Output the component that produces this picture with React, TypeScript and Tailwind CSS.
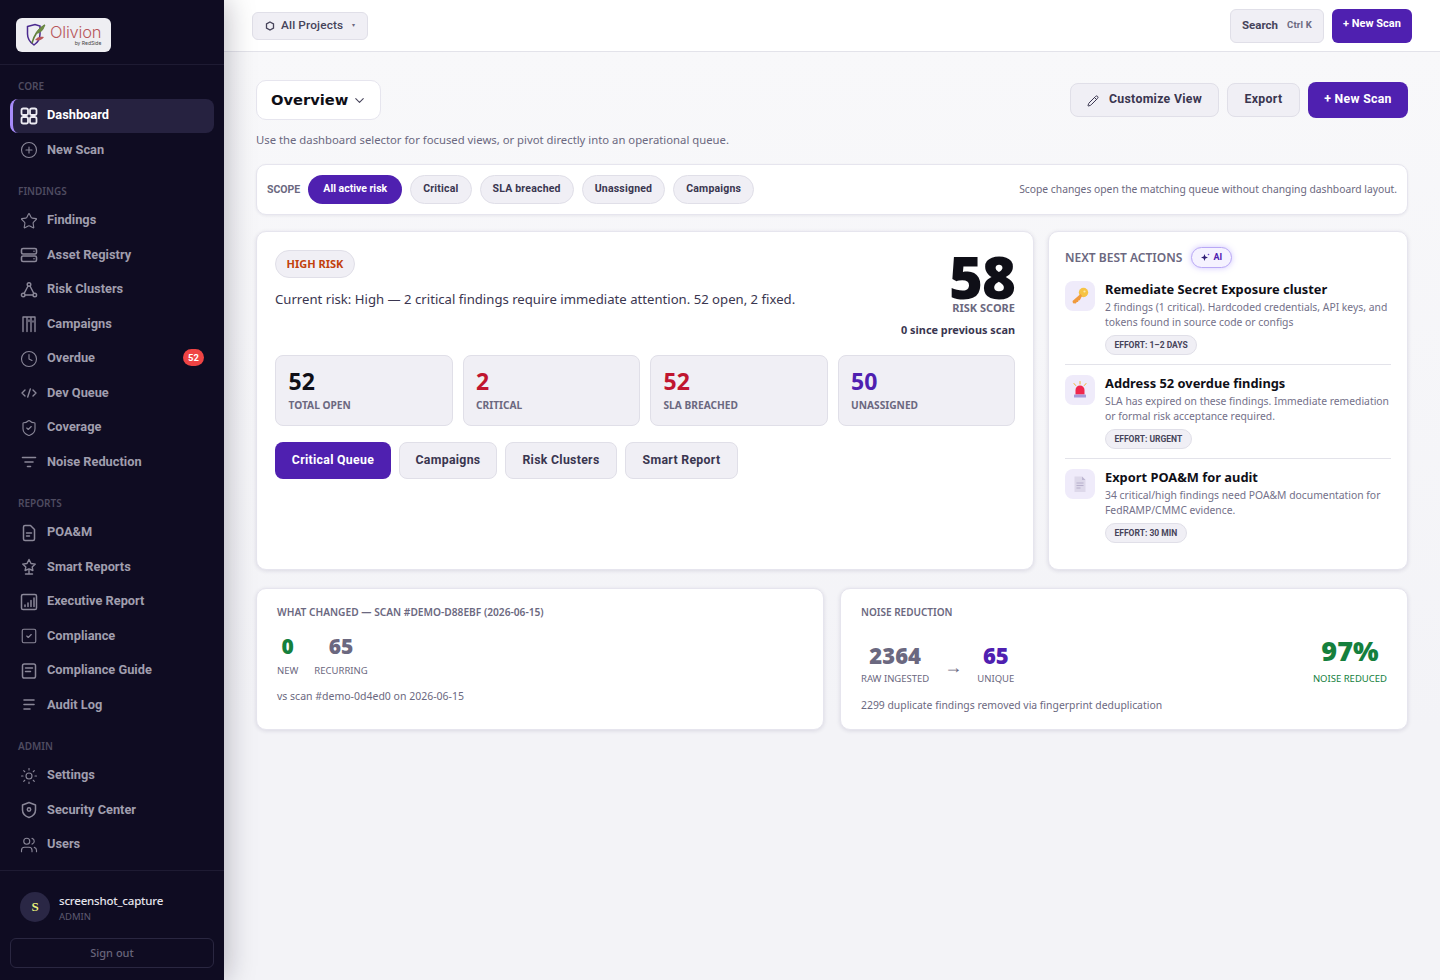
import React from "react";
import { CirclePlus, Star, Clock, ShieldCheck, SquareCheck, Sun, Users, ChevronDown, Pencil } from "lucide-react";

const S = (p: { children: React.ReactNode; sw?: number }) => (
  <svg width="18" height="18" viewBox="0 0 18 18" fill="none" stroke="currentColor" strokeWidth={p.sw ?? 1.4} strokeLinecap="round" strokeLinejoin="round">{p.children}</svg>
);

const IconGrid = () => (
  <S sw={1.8}>
    <rect x="1.500" y="1.500" width="6.500" height="6.500" rx="1.800" /><rect x="10" y="1.500" width="6.500" height="6.500" rx="1.800" />
    <rect x="1.500" y="10" width="6.500" height="6.500" rx="1.800" /><rect x="10" y="10" width="6.500" height="6.500" rx="1.800" />
  </S>
);
const IconServer = () => (
  <S sw={1.6}><rect x="1.500" y="2.500" width="15" height="5.500" rx="1.500" /><rect x="1.500" y="10" width="15" height="5.500" rx="1.500" /><path d="M14 5.200h.01M14 12.800h.01" /></S>
);
const IconCluster = () => (
  <S>
    <circle cx="9" cy="3.500" r="1.800" /><circle cx="3.200" cy="14" r="1.800" /><circle cx="14.800" cy="14" r="1.800" />
    <path d="M8 5 4.200 12.400M10 5l3.800 7.400M5 14h8" />
  </S>
);
const IconCampaign = () => (
  <S><path d="M3 16.500V2h12v14.500M7 2v14.500M11 2v14.500" /><path d="M9 5v1.500M13 6v1" /></S>
);
const IconCode = () => (
  <S><path d="M5 6 2 9l3 3M13 6l3 3-3 3M10.300 5 7.700 13" /></S>
);
const IconFilter = () => (
  <S sw={1.6}><path d="M2.500 4.500h13M5 9h8M7.500 13.500h3" /></S>
);
const IconFile = () => (
  <S sw={1.5}><path d="M3.500 3A1.500 1.500 0 0 1 5 1.500h5.500l4 4V15a1.500 1.500 0 0 1-1.500 1.500H5A1.500 1.500 0 0 1 3.500 15z" /><path d="M6.500 9h5M6.500 12h3" /></S>
);
const IconStarStand = () => (
  <S><path d="m9 1.500 2 4 4.300.6-3.100 3 .7 3.400L9 10.800l-3.900 1.700.7-3.400-3.100-3 4.300-.6z" /><path d="M9 11.500v4.500M5.500 16h7" /></S>
);
const IconChart = () => (
  <S sw={1.5}><rect x="1.500" y="1.500" width="15" height="15" rx="1.600" /><path d="M5 13.500v-1.500M8 13.500V10M11 13.500V7.500M14 13.500V5" /></S>
);
const IconGuide = () => (
  <S sw={1.5}><rect x="2.500" y="2" width="13" height="14" rx="1.800" /><path d="M5.500 6h7M5.500 9.500h5" /></S>
);
const IconLog = () => (
  <S sw={1.6}><path d="M4 4h10M4 8.500h10M4 13h6" /></S>
);
const IconShieldDot = () => (
  <S sw={1.5}><path d="M9 1.500 15.500 4v5c0 3.800-2.800 6.300-6.500 7.500C5.300 15.300 2.500 12.800 2.500 9V4z" /><circle cx="9" cy="8.500" r="1.700" /></S>
);

const L = (C: React.ComponentType<{ size?: number; strokeWidth?: number }>) => () => <C size={18} strokeWidth={1.5} />;

type Item = { label: string; icon: () => React.ReactElement; active?: boolean; badge?: string };
const groups: { title: string; items: Item[] }[] = [
  { title: "CORE", items: [
    { label: "Dashboard", icon: IconGrid, active: true },
    { label: "New Scan", icon: L(CirclePlus) },
  ] },
  { title: "FINDINGS", items: [
    { label: "Findings", icon: L(Star) },
    { label: "Asset Registry", icon: IconServer },
    { label: "Risk Clusters", icon: IconCluster },
    { label: "Campaigns", icon: IconCampaign },
    { label: "Overdue", icon: L(Clock), badge: "52" },
    { label: "Dev Queue", icon: IconCode },
    { label: "Coverage", icon: L(ShieldCheck) },
    { label: "Noise Reduction", icon: IconFilter },
  ] },
  { title: "REPORTS", items: [
    { label: "POA&M", icon: IconFile },
    { label: "Smart Reports", icon: IconStarStand },
    { label: "Executive Report", icon: IconChart },
    { label: "Compliance", icon: L(SquareCheck) },
    { label: "Compliance Guide", icon: IconGuide },
    { label: "Audit Log", icon: IconLog },
  ] },
  { title: "ADMIN", items: [
    { label: "Settings", icon: L(Sun) },
    { label: "Security Center", icon: IconShieldDot },
    { label: "Users", icon: L(Users) },
  ] },
];

const Logo = () => (
  <div className="mx-4 mt-[18px] flex h-[34px] w-[95px] items-center gap-[3px] rounded-md bg-[#eeeef2] pl-[10px]">
    <svg width="21" height="25" viewBox="0 0 21 25" fill="none">
      <path d="M1.500 3.500 9 1.500l5 1.500v8c0 5-3 9-6 11-3-2-6.500-6-6.500-11z" stroke="#4b2a8f" strokeWidth="1.500" />
      <path d="M6 20C8 13 12 6 19 2" stroke="#5f7d3a" strokeWidth="1.600" />
      <path d="M10 11C11 6 15 4 19 2c-1 5-4 8-9 9z" fill="#6d8a45" />
      <path d="M9 17c2-3 5-4 9-3-2 3-5 4-9 3z" fill="#b8565a" />
    </svg>
    <div className="flex flex-col items-end leading-none">
      <span className="font-['Inter',sans-serif] text-[16.5px] leading-[15px] font-light tracking-[-0.2px] text-[#b8565a]">Olivion</span>
      <span className="font-['Inter',sans-serif] text-[5px] leading-[6px] text-[#444]">by RedSide</span>
    </div>
  </div>
);

const Sidebar = () => (
  <aside className="relative z-10 flex h-[980px] w-[224px] shrink-0 flex-col bg-[#0f0c22] shadow-[2px_0_28px_rgba(15,12,34,0.28)]">
    <div className="h-[65px] shrink-0 border-b border-[#1e1b33]"><Logo /></div>
    <nav className="min-h-0 flex-1 px-[10px] pt-[14.500px]">
      {groups.map((g) => (
        <div key={g.title} className="mb-[17px]">
          <div className="mb-[6px] h-[13px] pl-2 text-[10px] leading-[13px] font-semibold text-[#4e4b60]">{g.title}</div>
          <div className="flex flex-col">
            {g.items.map((it) => (
              <div key={it.label} className={`flex h-[34.500px] items-center gap-[9px] rounded-lg pr-[10px] pb-[2px] ${it.active ? "border-l-[3px] border-[#a78bfa] bg-[#262240] pl-[7px] text-white" : "pl-[10px] text-[#a09eae]"}`}>
                <span className={`flex w-[18px] shrink-0 justify-center pt-[2px] ${it.active ? "text-[#ecebf2]" : "text-[#8a8798]"}`}><it.icon /></span>
                <span className="flex-1 font-['Roboto',sans-serif] text-[12.800px] font-bold">{it.label}</span>
                {it.badge && <span className="flex h-[17px] w-[21px] items-center justify-center rounded-full bg-[#ef4444] font-['Roboto',sans-serif] text-[9.500px] font-bold text-white">{it.badge}</span>}
              </div>
            ))}
          </div>
        </div>
      ))}
    </nav>
    <div className="h-[110px] shrink-0 border-t border-[#1e1b33] px-[10px]">
      <div className="mt-[21px] flex h-[30px] items-center gap-[9px] pl-[10px]">
        <div className="flex h-[30px] w-[30px] items-center justify-center rounded-full bg-[#2a2745] font-['Liberation_Serif',serif] text-[13px] font-bold text-[#eaf27a]">S</div>
        <div className="flex flex-col pt-[2px]">
          <span className="text-[11.500px] leading-[15px] font-medium tracking-[-0.2px] text-[#e5e4ec]">screenshot_capture</span>
          <span className="mt-[1px] text-[9.500px] leading-[15px] text-[#5d5a70]">ADMIN</span>
        </div>
      </div>
      <div className="mt-[16px] flex h-[30px] items-center justify-center rounded-md border border-[#2a2741] text-[11px] font-medium text-[#68657a]">Sign out</div>
    </div>
  </aside>
);

const Top = () => (
  <header className="flex h-[52px] shrink-0 items-center justify-between border-b border-[#e3e3ea] bg-white pl-[28px] pr-[28px]">
    <div className="flex h-[28px] w-[116px] items-center gap-[6px] rounded-md border border-[#e0dfe8] bg-[#f0eff5] pl-[12px] font-['Roboto',sans-serif] text-[11.800px] font-medium tracking-[0.15px] text-[#46435a]">
      <svg width="10" height="10" viewBox="0 0 10 10" fill="none" stroke="#46435a" strokeWidth="1.300"><path d="M5 1 8.500 3v4L5 9 1.500 7V3z" /></svg>
      <span>All Projects</span>
      <span className="mb-[3px] ml-[3px] text-[6px] text-[#6b6880]">▾</span>
    </div>
    <div className="flex items-center gap-2">
      <div className="flex h-[34px] w-[94px] items-center gap-[9px] rounded-md border border-[#e0dfe8] bg-[#f0eff5] pl-[11px] font-['Roboto',sans-serif] text-[#46435a]">
        <span className="text-[11.500px] font-bold">Search</span>
        <span className="text-[9.500px] font-bold tracking-[0.2px] text-[#6b6880]">Ctrl K</span>
      </div>
      <div className="flex h-[34px] w-[80px] items-center justify-center rounded-md bg-[#4f20b0] pb-[2px] font-['Roboto',sans-serif] text-[11px] font-bold text-white">+ New Scan</div>
    </div>
  </header>
);

const Ghost = ({ children, cls }: { children: React.ReactNode; cls: string }) => (
  <div className={`flex items-center justify-center rounded-lg border border-[#e0dfe8] bg-[#f0eff5] font-['Roboto',sans-serif] text-[12.300px] font-bold tracking-[0.3px] text-[#3a3650] ${cls}`}>{children}</div>
);

const pills = ["Critical", "SLA breached", "Unassigned", "Campaigns"];
const stats: [string, string, string][] = [
  ["52", "TOTAL OPEN", "text-[#0f0f17]"],
  ["2", "CRITICAL", "text-[#c0152f]"],
  ["52", "SLA BREACHED", "text-[#c0152f]"],
  ["50", "UNASSIGNED", "text-[#4f20b0]"],
];

const KeyIcon = () => (
  <svg width="18" height="18" viewBox="0 0 18 18">
    <circle cx="12.500" cy="5.500" r="4.700" fill="#f6c344" />
    <circle cx="13.500" cy="4.500" r="1.100" fill="#fbe7a8" />
    <path d="M9.500 7 1.500 14l.5 2.300 2.800.3 1-1.600 1.300-.1.300-1.500 1.400-.2L11 9z" fill="#f09a3e" />
  </svg>
);
const SirenIcon = () => (
  <svg width="18" height="18" viewBox="0 0 18 18">
    <path d="M9 .5v2.500M3 2.500l1.700 2M15 2.500l-1.700 2" stroke="#f2b431" strokeWidth="1" strokeLinecap="round" />
    <path d="M4.500 13.500V9a4.500 4.500 0 0 1 9 0v4.500z" fill="#f0264c" />
    <rect x="3" y="13.500" width="12" height="3" rx="0.500" fill="#a79ad8" />
  </svg>
);
const DocIcon = () => (
  <svg width="18" height="18" viewBox="0 0 18 18">
    <path d="M3.500 1.500H11L14.500 5v12h-11z" fill="#ddd8ea" />
    <path d="M11 1.500 14.500 5H11z" fill="#bdb6d2" />
    <path d="M5.500 8h7M5.500 10.500h7M5.500 13h4" stroke="#b3abc9" strokeWidth="0.900" />
  </svg>
);

const actions = [
  { icon: KeyIcon, title: "Remediate Secret Exposure cluster", d: ["2 findings (1 critical). Hardcoded credentials, API keys, and", "tokens found in source code or configs"], e: "EFFORT: 1–2 DAYS" },
  { icon: SirenIcon, title: "Address 52 overdue findings", d: ["SLA has expired on these findings. Immediate remediation", "or formal risk acceptance required."], e: "EFFORT: URGENT" },
  { icon: DocIcon, title: "Export POA&M for audit", d: ["34 critical/high findings need POA&M documentation for", "FedRAMP/CMMC evidence."], e: "EFFORT: 30 MIN" },
];

const rowCls = ["h-[84px] border-b border-[#e3e3ea]", "h-[94px] border-b border-[#e3e3ea] pt-[10px]", "pt-[10px]"];

const cardCls = "rounded-[10px] border border-[#e6e5ee] bg-white shadow-[0_1px_4px_rgba(30,25,70,0.12)]";

export default function App() {
  return (
    <div className="flex h-[980px] w-[1440px] overflow-hidden bg-[#f3f3f7] font-['Noto_Sans',sans-serif]">
      <Sidebar />
      <main className="flex min-w-0 flex-1 flex-col">
        <Top />
        <div className="flex flex-col bg-gradient-to-b from-[#f8f8fa] to-[#f3f3f7] px-[32px] pt-[28px]">
          <div className="flex items-start justify-between">
            <div className="flex h-[40px] w-[125px] items-center gap-[4px] rounded-[10px] border border-[#e6e5ee] bg-white pl-[14px] pt-[1px]">
              <span className="font-['DejaVu_Sans',sans-serif] text-[14.700px] font-bold text-[#0f0f17]">Overview</span>
              <ChevronDown size={15} strokeWidth={1.700} className="text-[#46435a]" />
            </div>
            <div className="mt-[2px] flex items-center gap-2">
              <Ghost cls="h-[34px] w-[149px] gap-[10px] pb-[2px]"><Pencil size={12} strokeWidth={2} className="mt-[3px]" /><span>Customize View</span></Ghost>
              <Ghost cls="h-[34px] w-[73px] pb-[2px]">Export</Ghost>
              <div className="flex h-[36px] w-[100px] items-center justify-center rounded-lg bg-[#4f20b0] pb-[2px] font-['Roboto',sans-serif] text-[12.300px] font-bold tracking-[0.3px] text-white">+ New Scan</div>
            </div>
          </div>
          <p className="mt-[12px] text-[11.300px] leading-[16px] text-[#6b6880]">Use the dashboard selector for focused views, or pivot directly into an operational queue.</p>

          <div className="mt-[16px] flex h-[51px] items-center rounded-[10px] border border-[#e6e5ee] bg-white pl-[10px] pr-[10px] shadow-[0_1px_3px_rgba(30,25,70,0.07)]">
            <span className="mr-[8px] font-['Roboto',sans-serif] text-[10.500px] font-bold text-[#6b6880]">SCOPE</span>
            <span className="flex h-[29px] w-[94px] items-center justify-center rounded-full bg-[#4f20b0] pb-[1px] font-['Roboto',sans-serif] text-[10.500px] font-bold text-white">All active risk</span>
            <div className="ml-[8px] flex gap-[8px] font-['Roboto',sans-serif]">
              {pills.map((p) => (
                <span key={p} className="flex h-[29px] items-center rounded-full border border-[#e0dfe8] bg-[#f0eff5] px-[12px] pb-[1px] text-[10.500px] font-bold tracking-[0.2px] text-[#3a3650]">{p}</span>
              ))}
            </div>
            <span className="ml-auto text-[10.300px] text-[#6b6880]">Scope changes open the matching queue without changing dashboard layout.</span>
          </div>

          <div className="mt-[16px] grid grid-cols-[778px_360px] gap-[14px]">
            <section className={`${cardCls} h-[339px] px-[18px] pt-[18px]`}>
              <div className="flex justify-between">
                <div>
                  <span className="inline-flex h-[28px] w-[80px] items-center justify-center rounded-full border border-[#e0dfe8] bg-[#f0eff5] text-[11px] font-bold text-[#c2410c]">HIGH RISK</span>
                  <p className="mt-[12px] text-[13.150px] leading-[18px] text-[#3a3650]">Current risk: High — 2 critical findings require immediate attention. 52 open, 2 fixed.</p>
                </div>
                <div className="flex flex-col items-end">
                  <span className="mt-[1px] text-[58px] leading-[51px] font-black tracking-[-1px] text-[#0f0f17]">58</span>
                  <span className="-mt-[1px] text-[11px] leading-[14px] font-bold text-[#6b6880]">RISK SCORE</span>
                  <span className="mt-[8px] text-[10.900px] leading-[14px] font-bold text-[#3a3650]">0 since previous scan</span>
                </div>
              </div>
              <div className="mt-[18px] grid grid-cols-4 gap-[10px]">
                {stats.map(([n, l, c]) => (
                  <div key={l} className="h-[71px] rounded-lg border border-[#e0dfe8] bg-[#f0eff5] pl-[12.500px] pt-[10px]">
                    <div className={`text-[23px] leading-[30px] font-bold ${c}`}>{n}</div>
                    <div className="mt-[2px] text-[10.200px] leading-[14px] font-bold text-[#6b6880]">{l}</div>
                  </div>
                ))}
              </div>
              <div className="mt-[16px] flex gap-2">
                <div className="flex h-[37px] w-[116px] items-center justify-center rounded-lg bg-[#4f20b0] pb-[1px] font-['Roboto',sans-serif] text-[12.300px] font-bold tracking-[0.3px] text-white">Critical Queue</div>
                <Ghost cls="h-[37px] w-[98px] pb-[1px]">Campaigns</Ghost>
                <Ghost cls="h-[37px] w-[112px] pb-[1px]">Risk Clusters</Ghost>
                <Ghost cls="h-[37px] w-[113px] pb-[1px]">Smart Report</Ghost>
              </div>
            </section>

            <section className={`${cardCls} h-[339px] px-[16px] pt-[15px]`}>
              <div className="flex h-[21px] items-center gap-[9px]">
                <span className="text-[12px] font-semibold text-[#6b6880]">NEXT BEST ACTIONS</span>
                <span className="flex h-[21px] w-[41px] items-center justify-center gap-[3px] rounded-full border border-[#b9a8f5] bg-[#f5f2ff] font-['Roboto',sans-serif] text-[9px] font-bold text-[#4f20b0] shadow-[0_0_6px_rgba(124,92,255,0.35)]">
                  <svg width="9" height="9" viewBox="0 0 9 9"><path d="M3.500 1 4.400 3.600 7 4.500 4.400 5.400 3.500 8 2.600 5.400 0 4.500 2.600 3.600z" fill="#2f1d75" /><circle cx="7.500" cy="1.500" r="0.800" fill="#6d4ad1" /></svg>
                  AI
                </span>
              </div>
              <div className="mt-[13px] flex flex-col">
                {actions.map((a, i) => (
                  <div key={a.title} className={`flex gap-[10px] ${rowCls[i]}`}>
                    <div className="flex h-[30px] w-[30px] shrink-0 items-center justify-center rounded-lg bg-[#efebfa]"><a.icon /></div>
                    <div className="min-w-0 flex-1">
                      <div className="text-[12.850px] leading-[16px] font-bold text-[#0f0f17]">{a.title}</div>
                      <div className="mt-[2.500px] text-[10.350px] leading-[15px] whitespace-nowrap text-[#74718a]">{a.d[0]}<br />{a.d[1]}</div>
                      <span className="mt-[3.500px] inline-flex h-[20px] items-center rounded-full border border-[#e0dfe8] bg-[#f0eff5] px-[8.500px] font-['Roboto',sans-serif] text-[8.500px] font-bold text-[#46435a]">{a.e}</span>
                    </div>
                  </div>
                ))}
              </div>
            </section>
          </div>

          <div className="mt-[18px] grid grid-cols-2 gap-[16px]">
            <section className={`${cardCls} h-[142px] px-[20px] pt-[16px]`}>
              <div className="text-[10.200px] leading-[14px] font-semibold text-[#6b6880]">WHAT CHANGED — SCAN #DEMO-D88EBF (2026-06-15)</div>
              <div className="mt-[13px] flex gap-[16px]">
                <div className="flex flex-col items-center">
                  <span className="text-[21px] leading-[28px] font-black text-[#15803d]">0</span>
                  <span className="mt-[4px] text-[9.500px] leading-[14px] text-[#6b6880]">NEW</span>
                </div>
                <div className="flex flex-col items-center">
                  <span className="text-[21px] leading-[28px] font-black text-[#6b6880]">65</span>
                  <span className="mt-[4px] text-[9.500px] leading-[14px] text-[#6b6880]">RECURRING</span>
                </div>
              </div>
              <div className="mt-[11px] text-[10.500px] leading-[14px] text-[#6b6880]">vs scan #demo-0d4ed0 on 2026-06-15</div>
            </section>
            <section className={`${cardCls} h-[142px] px-[20px] pt-[16px]`}>
              <div className="text-[10px] leading-[14px] font-semibold text-[#6b6880]">NOISE REDUCTION</div>
              <div className="mt-[14px] flex items-end justify-between">
                <div className="flex items-end">
                  <div className="flex flex-col items-center">
                    <span className="text-[22px] leading-[30px] font-black text-[#6b6880]">2364</span>
                    <span className="mt-[2px] text-[9.500px] leading-[14px] text-[#6b6880]">RAW INGESTED</span>
                  </div>
                  <span className="mx-[15px] mb-[7px] font-['Liberation_Sans',sans-serif] text-[18px] leading-[24px] text-[#6b6880]">→</span>
                  <div className="flex flex-col items-center">
                    <span className="text-[22px] leading-[30px] font-black text-[#4f20b0]">65</span>
                    <span className="mt-[2px] text-[9.500px] leading-[14px] text-[#6b6880]">UNIQUE</span>
                  </div>
                </div>
                <div className="flex flex-col items-center">
                  <span className="text-[27px] leading-[36px] font-black text-[#15803d]">97%</span>
                  <span className="mt-[3px] text-[9.500px] leading-[14px] text-[#15803d]">NOISE REDUCED</span>
                </div>
              </div>
              <div className="mt-[12px] text-[10.400px] leading-[14px] text-[#6b6880]">2299 duplicate findings removed via fingerprint deduplication</div>
            </section>
          </div>
        </div>
      </main>
    </div>
  );
}
